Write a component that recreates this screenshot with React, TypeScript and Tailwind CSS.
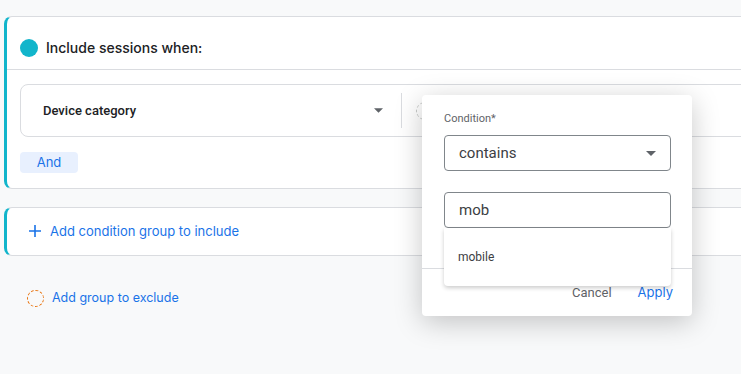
import React from 'react';

const Caret: React.FC<{ className?: string }> = ({ className }) => (
  <svg viewBox="0 0 10 5" className={className}>
    <path d="M0 0 L10 0 L5 5 Z" fill="currentColor" />
  </svg>
);

const gsans = { fontFamily: 'Inter, Roboto, sans-serif' };

const ConditionPopup: React.FC = () => (
  <div className="absolute left-[422px] top-[95px] w-[270px] h-[221px] bg-white rounded-[4px] shadow-[0_6px_28px_rgba(0,0,0,0.22)]">
    <div className="px-[22px] pt-[17px]">
      <p className="text-[11px] leading-[14px] text-[#5f6368]">Condition*</p>
      <div className="mt-[9px] h-[36px] w-[227px] border border-[#80868b] rounded-[4px] flex items-center justify-between pl-[14px] pr-[14px]">
        <span className="text-[15px] text-[#3c4043]">contains</span>
        <Caret className="w-[10px] h-[5px] text-[#5f6368]" />
      </div>
      <div className="mt-[21px] h-[36px] w-[227px] border border-[#80868b] rounded-[4px] flex items-center pl-[14px]">
        <span className="text-[15px] text-[#3c4043]">mob</span>
      </div>
    </div>

    {/* footer */}
    <div className="absolute left-0 right-0 top-[173px] border-t border-[#dadce0] h-[48px] flex items-center justify-end pr-[19px] gap-[26px]">
      <span className="text-[13px] text-[#5f6368]">Cancel</span>
      <span className="text-[13px] text-[#1a73e8]" style={gsans}>Apply</span>
    </div>

    {/* autocomplete list */}
    <div className="absolute left-[22px] top-[133px] w-[227px] h-[58px] bg-white rounded-b-[4px] shadow-[0_2px_4px_rgba(0,0,0,0.2)] flex items-center pl-[14px]">
      <span className="text-[12px] text-[#3c4043]">mobile</span>
    </div>
  </div>
);

const App: React.FC = () => {
  return (
    <div
      className="relative w-[741px] h-[374px] overflow-hidden bg-[#f8f9fa]"
      style={{ fontFamily: 'Roboto, "Noto Sans", sans-serif' }}
    >
      <div className="pl-[4px] pt-[16px] w-[900px]">
        {/* Include group */}
        <div className="bg-white border border-[#dadce0] border-l-[3px] border-l-[#12b5cb] rounded-l-[8px]">
          <div className="h-[53px] pt-[9px] flex items-center pl-[13px] gap-[8px] border-b border-[#dadce0]">
            <span className="w-[18px] h-[18px] rounded-full bg-[#12b5cb]" />
            <span className="text-[14px] font-medium text-[#202124]" style={gsans}>Include sessions when:</span>
          </div>
          <div className="pl-[13px] pt-[14px] pb-[14px]">
            <div className="h-[53px] border border-[#dadce0] rounded-[8px] flex items-center">
              <div className="w-[380px] flex items-center justify-between pl-[22px] pr-[18px]">
                <span className="text-[13px] font-medium text-[#202124]">Device category</span>
                <Caret className="w-[9px] h-[5px] text-[#5f6368]" />
              </div>
              <div className="w-px h-[35px] bg-[#dadce0]" />
              <span className="ml-[14px] w-[18px] h-[18px] rounded-full border border-dashed border-[#c4c7c5]" />
            </div>
            <button className="mt-[15px] h-[21px] w-[58px] rounded-[4px] bg-[#e8f0fe] text-[13px] text-[#1a73e8]" style={gsans}>
              And
            </button>
          </div>
        </div>

        {/* Add include group */}
        <div className="mt-[18px] h-[49px] bg-white border border-[#dadce0] border-l-[3px] border-l-[#12b5cb] rounded-l-[8px] flex items-center pl-[22px] gap-[9px]">
          <svg viewBox="0 0 12 12" className="w-[12px] h-[12px] text-[#1a73e8]">
            <path d="M6 0 V12 M0 6 H12" stroke="currentColor" strokeWidth="1.6" />
          </svg>
          <span className="text-[13px] text-[#1a73e8]" style={gsans}>Add condition group to include</span>
        </div>

        {/* Exclude */}
        <div className="mt-[33px] flex items-center pl-[23px] gap-[8px]">
          <span className="w-[17px] h-[17px] rounded-full border border-dashed border-[#e8710a]" />
          <span className="text-[12.5px] text-[#1a73e8]" style={gsans}>Add group to exclude</span>
        </div>
      </div>

      <ConditionPopup />
    </div>
  );
};

export default App;
